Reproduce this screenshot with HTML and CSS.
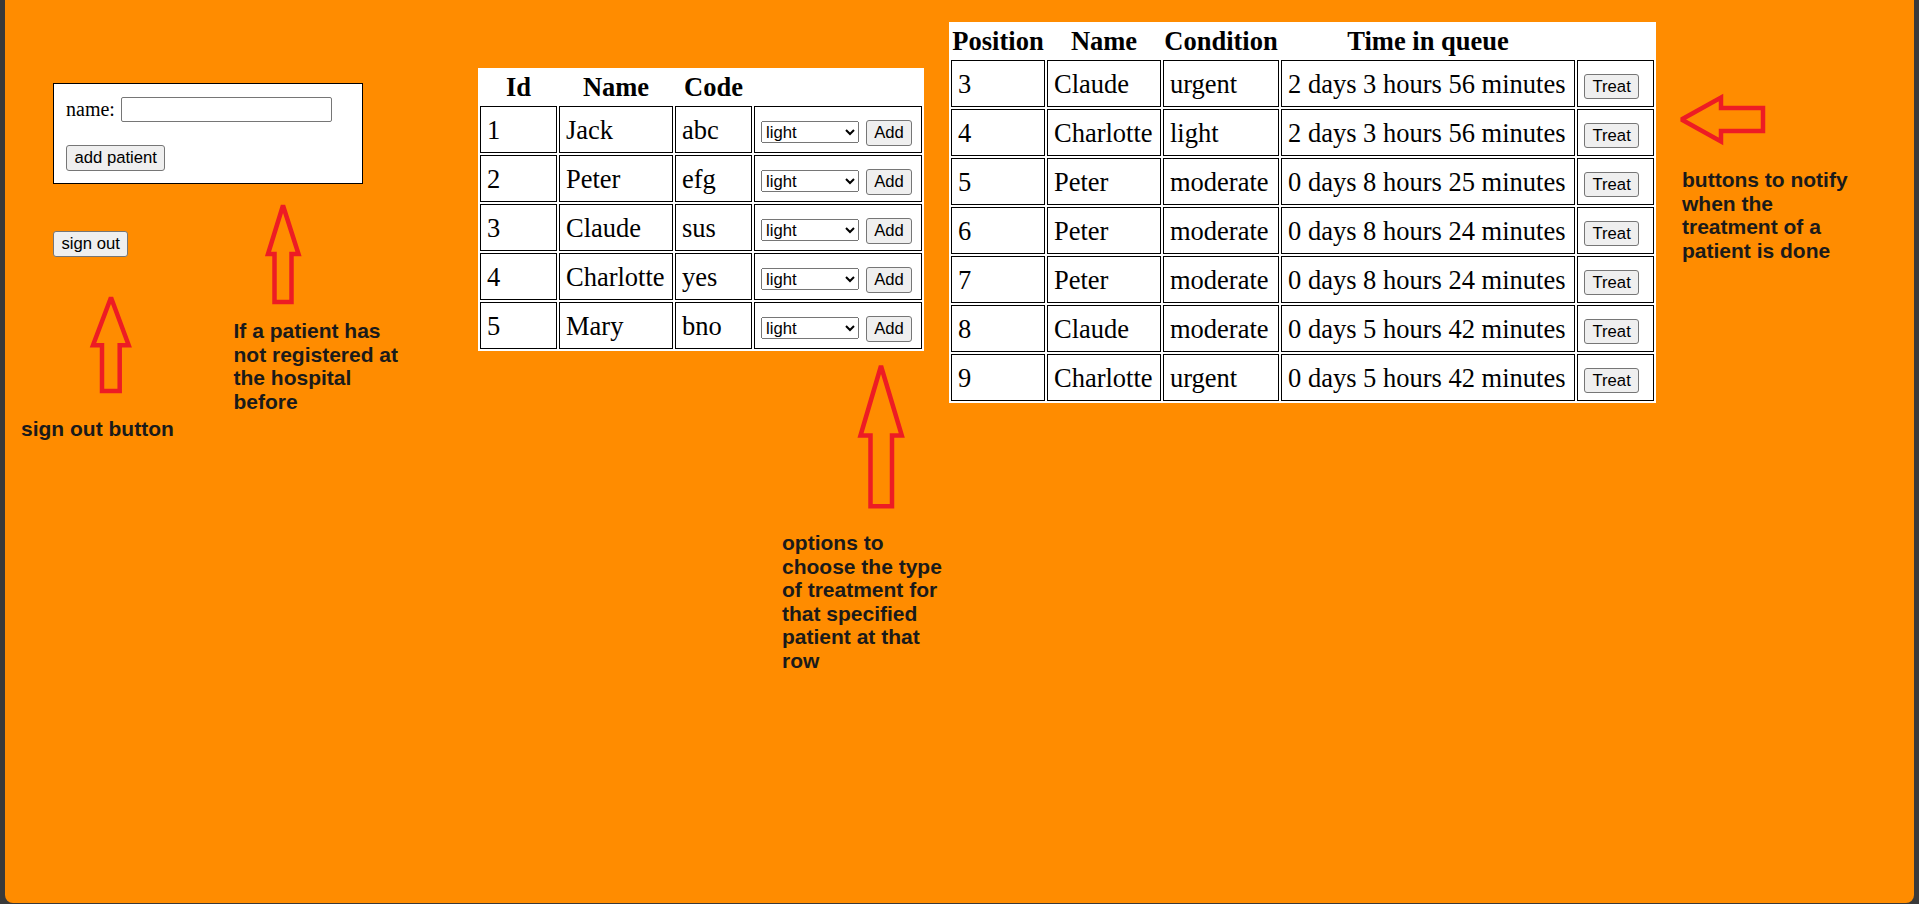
FILE: index.html
```html
<!DOCTYPE html>
<html lang="en">
<head>
<meta charset="utf-8">
<title>Hospital queue</title>
<link rel="stylesheet" href="styles.css">
</head>
<body>
<div class="window">
  <div class="layout">
    <div class="side">
      <form class="patient-form">
        <div class="name-row">
          <label for="pname">name:</label>
          <input id="pname" class="name-input" type="text">
        </div>
        <button type="button" class="btn form-submit">add patient</button>
      </form>
      <button type="button" class="btn signout">sign out</button>
    </div>

    <table class="grid patients">
      <thead>
        <tr><th class="w-id">Id</th><th class="w-name">Name</th><th class="w-code">Code</th><th class="w-action"></th></tr>
      </thead>
      <tbody>
        <tr><td>1</td><td>Jack</td><td>abc</td><td><select class="sel"><option>light</option><option>moderate</option><option>urgent</option></select> <button type="button" class="btn btn-add">Add</button></td></tr>
        <tr><td>2</td><td>Peter</td><td>efg</td><td><select class="sel"><option>light</option><option>moderate</option><option>urgent</option></select> <button type="button" class="btn btn-add">Add</button></td></tr>
        <tr><td>3</td><td>Claude</td><td>sus</td><td><select class="sel"><option>light</option><option>moderate</option><option>urgent</option></select> <button type="button" class="btn btn-add">Add</button></td></tr>
        <tr><td>4</td><td>Charlotte</td><td>yes</td><td><select class="sel"><option>light</option><option>moderate</option><option>urgent</option></select> <button type="button" class="btn btn-add">Add</button></td></tr>
        <tr><td>5</td><td>Mary</td><td>bno</td><td><select class="sel"><option>light</option><option>moderate</option><option>urgent</option></select> <button type="button" class="btn btn-add">Add</button></td></tr>
      </tbody>
    </table>

    <table class="grid queue">
      <thead>
        <tr><th class="w-pos">Position</th><th class="w-qname">Name</th><th class="w-cond">Condition</th><th class="w-time">Time in queue</th><th class="w-treat"></th></tr>
      </thead>
      <tbody>
        <tr><td>3</td><td>Claude</td><td>urgent</td><td>2 days 3 hours 56 minutes</td><td><button type="button" class="btn btn-treat">Treat</button></td></tr>
        <tr><td>4</td><td>Charlotte</td><td>light</td><td>2 days 3 hours 56 minutes</td><td><button type="button" class="btn btn-treat">Treat</button></td></tr>
        <tr><td>5</td><td>Peter</td><td>moderate</td><td>0 days 8 hours 25 minutes</td><td><button type="button" class="btn btn-treat">Treat</button></td></tr>
        <tr><td>6</td><td>Peter</td><td>moderate</td><td>0 days 8 hours 24 minutes</td><td><button type="button" class="btn btn-treat">Treat</button></td></tr>
        <tr><td>7</td><td>Peter</td><td>moderate</td><td>0 days 8 hours 24 minutes</td><td><button type="button" class="btn btn-treat">Treat</button></td></tr>
        <tr><td>8</td><td>Claude</td><td>moderate</td><td>0 days 5 hours 42 minutes</td><td><button type="button" class="btn btn-treat">Treat</button></td></tr>
        <tr><td>9</td><td>Charlotte</td><td>urgent</td><td>0 days 5 hours 42 minutes</td><td><button type="button" class="btn btn-treat">Treat</button></td></tr>
      </tbody>
    </table>
  </div>

  <svg class="arrows" width="1909" height="903" viewBox="0 0 1909 903" aria-hidden="true">
    <g fill="none" stroke="#ed1c24" stroke-width="4.5" stroke-linejoin="miter" stroke-miterlimit="2">
      <polygon points="278,205.5 293.5,254 286.5,254 286.5,302 269.5,302 269.5,254 263,254"/>
      <polygon points="106,297.5 123.7,345.3 114.7,345.3 114.7,391 97,391 97,345.3 88,345.3"/>
      <polygon points="876,366 896.8,435.5 887,435.5 887,506.3 865.5,506.3 865.5,435.5 855.5,435.5"/>
      <polygon points="1676.5,119.5 1716,97.5 1716,108 1758,108 1758,131 1716,131 1716,141.5"/>
    </g>
  </svg>

  <div class="note note-register">If a patient has<br>not registered at<br>the hospital<br>before</div>
  <div class="note note-signout">sign out button</div>
  <div class="note note-options">options to<br>choose the type<br>of treatment for<br>that specified<br>patient at that<br>row</div>
  <div class="note note-treat">buttons to notify<br>when the<br>treatment of a<br>patient is done</div>
</div>
</body>
</html>
```

FILE: styles.css
```css
html, body {
  margin: 0;
  height: 100%;
}

body {
  background: #3a3a3a;
  font-family: "Liberation Serif", "Times New Roman", serif;
  color: #000;
  overflow: hidden;
}

.window {
  position: relative;
  margin: 0 5px;
  height: 903px;
  background: #ff8c00;
  border-radius: 0 0 8px 8px;
}

.layout {
  display: flex;
  align-items: flex-start;
  padding-left: 48px;
}

.side {
  width: 310px;
  margin-top: 83px;
  display: flex;
  flex-direction: column;
  align-items: flex-start;
}

.patient-form {
  box-sizing: border-box;
  width: 310px;
  margin: 0;
  background: #fff;
  border: 1px solid #000;
  padding: 13px 12px 12px;
}

.name-row {
  display: flex;
  align-items: center;
  gap: 6px;
  font-size: 20px;
}

.name-input {
  box-sizing: border-box;
  width: 211px;
  height: 25px;
  margin: 0;
  border: 1px solid #767676;
  border-radius: 2px;
  padding: 1px 3px;
  font: 16.67px "Liberation Sans", Arial, sans-serif;
  background: #fff;
}

.btn {
  box-sizing: border-box;
  margin: 0;
  font: 16.67px "Liberation Sans", Arial, sans-serif;
  color: #000;
  background: #efefef;
  border: 1px solid #767676;
  border-radius: 3px;
  padding: 0 7.5px;
  height: 26px;
}

.form-submit {
  display: block;
  margin-top: 23px;
}

.signout {
  margin-top: 47px;
}

.btn-treat {
  height: 25px;
}

.sel {
  box-sizing: border-box;
  width: 98px;
  height: 22px;
  margin: 0;
  font: 16.67px "Liberation Sans", Arial, sans-serif;
  color: #000;
}

.grid {
  background: #fff;
  border-spacing: 2px;
}

.patients {
  margin-left: 115px;
  margin-top: 68px;
}

.queue {
  margin-left: 25px;
  margin-top: 22px;
}

.grid th {
  box-sizing: border-box;
  height: 34px;
  font-size: 26.5px;
  font-weight: bold;
  line-height: 32px;
  padding: 1px 0;
  text-align: center;
  white-space: nowrap;
}

.grid td {
  box-sizing: border-box;
  height: 47px;
  border: 1px solid #000;
  padding: 0 6px;
  font-size: 26.5px;
  line-height: 30px;
  text-align: left;
  vertical-align: middle;
  white-space: nowrap;
}

.w-id { width: 77px; }
.w-name { width: 114px; }
.w-code { width: 77px; }
.w-action { width: 168px; }

.w-pos { width: 94px; }
.w-qname { width: 114px; }
.w-cond { width: 116px; }
.w-time { width: 294px; }
.w-treat { width: 77px; }

.arrows {
  position: absolute;
  left: 0;
  top: 0;
  pointer-events: none;
}

.note {
  position: absolute;
  font: bold 21px/23.5px "Liberation Sans", Arial, sans-serif;
  color: #1a1a1a;
  white-space: nowrap;
}

.note-register { left: 228.5px; top: 319px; }
.note-signout { left: 16px; top: 417px; }
.note-options { left: 777px; top: 531px; }
.note-treat { left: 1677px; top: 168px; }
```
